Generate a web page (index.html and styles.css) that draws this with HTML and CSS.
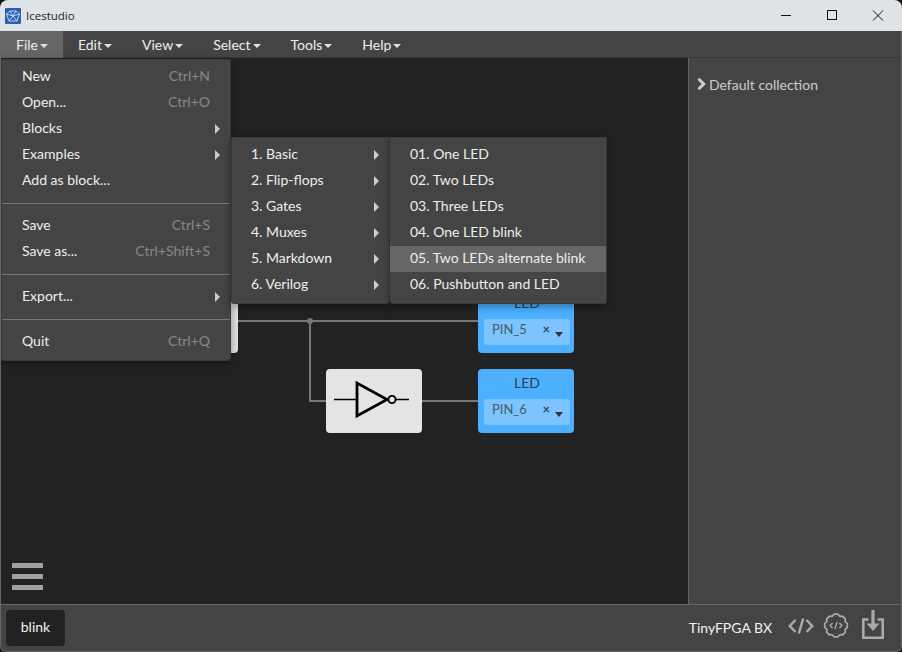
FILE: index.html
```html
<!DOCTYPE html>
<html lang="en">

<head>
    <meta charset="UTF-8" />
    <title>Icestudio</title>
    <link rel="stylesheet" href="styles.css">
</head>

<body>
    <div class="window">
        <div class="titlebar">
            <svg class="app-logo" viewBox="0 0 16 16">
                <rect width="16" height="16" rx="1" fill="#2b5fb3" />
                <path d="M1.5 6 5 3H11L14.5 6 12 13H4ZM5 3 8 8 11 3M1.5 6 8 8 14.5 6M4 13 8 8 12 13" fill="none"
                    stroke="#cfdcf2" stroke-width="0.9" />
            </svg>
            <span class="app-name">Icestudio</span>
            <div class="window-btns">
                <svg viewBox="0 0 46 31" class="win-btn"><path d="M18 15.5H28" stroke="#111" stroke-width="1" fill="none" /></svg>
                <svg viewBox="0 0 46 31" class="win-btn"><rect x="18.5" y="10.5" width="9" height="9" stroke="#111" fill="none" /></svg>
                <svg viewBox="0 0 46 31" class="win-btn"><path d="M18 10.5 28 20.5M28 10.5 18 20.5" stroke="#111" fill="none" /></svg>
            </div>
        </div>

        <div class="menubar">
            <div class="menu-title active">File<i class="caret"></i></div>
            <div class="menu-title">Edit<i class="caret"></i></div>
            <div class="menu-title">View<i class="caret"></i></div>
            <div class="menu-title">Select<i class="caret"></i></div>
            <div class="menu-title">Tools<i class="caret"></i></div>
            <div class="menu-title">Help<i class="caret"></i></div>
        </div>

        <div class="main">
            <div class="canvas">
                <svg class="wires" width="688" height="546">
                    <path d="M238 263H478M310 263V343H326M422 343H478" fill="none" stroke="#777" stroke-width="2" />
                    <circle cx="310" cy="263" r="3" fill="#777" />
                </svg>

                <div class="block hidden-block"></div>

                <div class="block not-gate">
                    <svg width="96" height="64" viewBox="0 0 96 64">
                        <path d="M8 30.5H31M70 30.5H83" fill="none" stroke="#000" stroke-width="1.7" />
                        <path d="M31 14V47L61 30.5Z" fill="none" stroke="#000" stroke-width="2.8" />
                        <circle cx="66" cy="30.5" r="3.6" fill="#e4e4e4" stroke="#000" stroke-width="1.9" />
                    </svg>
                </div>

                <div class="block led led-top">
                    <div class="led-label">LED</div>
                    <div class="pin-select"><span class="pin-name">PIN_5</span><span class="pin-x">×</span><i class="pin-caret"></i></div>
                </div>
                <div class="block led led-bottom">
                    <div class="led-label">LED</div>
                    <div class="pin-select"><span class="pin-name">PIN_6</span><span class="pin-x">×</span><i class="pin-caret"></i></div>
                </div>

                <div class="hamburger">
                    <span></span>
                    <span></span>
                    <span></span>
                </div>
            </div>

            <div class="sidebar">
                <div class="collection">
                    <svg class="chevron" width="10" height="14" viewBox="0 0 10 14">
                        <path d="M2.5 1.8 7.7 7 2.5 12.2" fill="none" stroke="#ccc" stroke-width="3" />
                    </svg>
                    Default collection
                </div>
            </div>
        </div>

        <div class="footer">
            <div class="tab">blink</div>
            <div class="board">TinyFPGA BX</div>
            <svg class="tool-icon code-icon" width="26" height="16" viewBox="0 0 26 16">
                <path d="M7.5 2 1.8 8 7.5 14M18.5 2 24.2 8 18.5 14M15.2 0.5 10.8 15.5" fill="none" stroke="#aaa" stroke-width="2.5" />
            </svg>
            <svg class="tool-icon gear-icon" width="26" height="25" viewBox="0 0 26 25">
                <path d="M11 1.2H15Q16.4 4.2 19.6 3.1L22.4 5.9Q21.3 9 24.3 10.5V14.5Q21.3 16 22.4 19.1L19.6 21.9Q16.4 20.8 15 23.8H11Q9.6 20.8 6.4 21.9L3.6 19.1Q4.7 16 1.7 14.5V10.5Q4.7 9 3.6 5.9L6.4 3.1Q9.6 4.2 11 1.2Z" fill="none" stroke="#aaa" stroke-width="1.7" stroke-linejoin="round" />
                <path d="M9.6 10 7 12.5 9.6 15M16.4 10 19 12.5 16.4 15M14.2 9 11.8 16" fill="none" stroke="#aaa" stroke-width="1.3" />
            </svg>
            <svg class="tool-icon save-icon" width="22" height="29" viewBox="0 0 22 29">
                <path d="M6.5 9.5H1.3V27.7H20.7V9.5H15.5" fill="none" stroke="#aaa" stroke-width="2.6" />
                <path d="M9.4 0H12.6V13.5H17.5L11 21 4.5 13.5H9.4Z" fill="#aaa" />
            </svg>
        </div>

        <!-- open menus -->
        <div class="menu menu-file">
            <div class="menu-item"><span>New</span><span class="shortcut">Ctrl+N</span></div>
            <div class="menu-item"><span>Open...</span><span class="shortcut">Ctrl+O</span></div>
            <div class="menu-item"><span>Blocks</span><i class="arrow"></i></div>
            <div class="menu-item"><span>Examples</span><i class="arrow"></i></div>
            <div class="menu-item"><span>Add as block...</span></div>
            <div class="divider"></div>
            <div class="menu-item"><span>Save</span><span class="shortcut">Ctrl+S</span></div>
            <div class="menu-item"><span>Save as...</span><span class="shortcut">Ctrl+Shift+S</span></div>
            <div class="divider"></div>
            <div class="menu-item"><span>Export...</span><i class="arrow"></i></div>
            <div class="divider"></div>
            <div class="menu-item"><span>Quit</span><span class="shortcut">Ctrl+Q</span></div>
        </div>

        <div class="menu menu-examples">
            <div class="menu-item"><span>1. Basic</span><i class="arrow"></i></div>
            <div class="menu-item"><span>2. Flip-flops</span><i class="arrow"></i></div>
            <div class="menu-item"><span>3. Gates</span><i class="arrow"></i></div>
            <div class="menu-item"><span>4. Muxes</span><i class="arrow"></i></div>
            <div class="menu-item"><span>5. Markdown</span><i class="arrow"></i></div>
            <div class="menu-item"><span>6. Verilog</span><i class="arrow"></i></div>
        </div>

        <div class="menu menu-basic">
            <div class="menu-item"><span>01. One LED</span></div>
            <div class="menu-item"><span>02. Two LEDs</span></div>
            <div class="menu-item"><span>03. Three LEDs</span></div>
            <div class="menu-item"><span>04. One LED blink</span></div>
            <div class="menu-item hover"><span>05. Two LEDs alternate blink</span></div>
            <div class="menu-item"><span>06. Pushbutton and LED</span></div>
        </div>
    </div>
</body>

</html>
```

FILE: styles.css
```css
html, body {
    margin: 0;
    padding: 0;
    background: #141414;
}

body {
    font-family: "Lato", "Liberation Sans", sans-serif;
    font-size: 14px;
    color: #e6e6e6;
}

.window {
    position: relative;
    width: 902px;
    height: 652px;
    display: flex;
    flex-direction: column;
    border-radius: 8px 8px 6px 6px;
    overflow: hidden;
    background: #444;
}

.window::after {
    content: "";
    position: absolute;
    top: 31px;
    left: 0;
    right: 0;
    bottom: 0;
    border: 1px solid #666;
    border-top: none;
    border-radius: 0 0 6px 6px;
    pointer-events: none;
}

/* title bar */
.titlebar {
    height: 31px;
    flex: none;
    display: flex;
    align-items: center;
    padding-left: 5px;
    background: #dfe3e8;
    color: #222;
}

.app-logo {
    width: 16px;
    height: 16px;
}

.app-name {
    margin-left: 5px;
    font-family: "Open Sans", sans-serif;
    font-size: 11.5px;
}

.window-btns {
    margin-left: auto;
    margin-right: 1px;
    display: flex;
}

.win-btn {
    width: 46px;
    height: 31px;
}

/* menu bar */
.menubar {
    height: 27px;
    flex: none;
    box-sizing: border-box;
    display: flex;
    padding-left: 1px;
    background: #444;
    border-bottom: 1px solid #3a3a3a;
}

.menu-title {
    display: flex;
    align-items: center;
    padding: 0 15px;
    height: 27px;
    color: #eee;
}

.menu-title.active {
    background: #666;
}

.caret {
    margin-left: 2px;
    margin-top: 2px;
    border-top: 4px solid #e0e0e0;
    border-left: 4px solid transparent;
    border-right: 4px solid transparent;
}

/* work area */
.main {
    flex: 1;
    display: flex;
    min-height: 0;
}

.canvas {
    position: relative;
    width: 688px;
    flex: none;
    background: #222;
}

.wires {
    position: absolute;
    top: 0;
    left: 0;
}

.block {
    position: absolute;
    width: 96px;
    height: 64px;
    border-radius: 4px;
}

.hidden-block {
    left: 142px;
    top: 231px;
    background: #e4e4e4;
}

.not-gate {
    left: 326px;
    top: 311px;
    background: #e4e4e4;
}

.led {
    left: 478px;
    background: #4db0ff;
    box-sizing: border-box;
    padding: 0 4px 0 6px;
    color: #263e52;
}

.led-top {
    top: 231px;
}

.led-bottom {
    top: 311px;
}

.led-label {
    height: 30px;
    line-height: 28px;
    text-align: center;
}

.pin-select {
    display: flex;
    align-items: center;
    width: 86px;
    height: 26px;
    box-sizing: border-box;
    padding: 0 7px 6px 8px;
    background: #7cc4ff;
    border-radius: 3px;
    font-size: 13px;
    color: #46596b;
}

.pin-x {
    margin-left: auto;
    font-weight: bold;
    color: #3a4a58;
}

.pin-caret {
    margin-left: 5px;
    margin-top: 11px;
    border-top: 5px solid #333;
    border-left: 4px solid transparent;
    border-right: 4px solid transparent;
}

.hamburger {
    position: absolute;
    left: 12px;
    top: 505px;
    display: flex;
    flex-direction: column;
    gap: 6px;
}

.hamburger span {
    display: block;
    width: 31px;
    height: 5px;
    background: #a0a0a0;
}

/* sidebar */
.sidebar {
    flex: 1;
    border-left: 1px solid #666;
}

.collection {
    display: flex;
    align-items: center;
    gap: 3px;
    padding: 16px 0 0 7px;
    height: 20px;
    color: #ccc;
}

/* footer */
.footer {
    height: 48px;
    flex: none;
    box-sizing: border-box;
    display: flex;
    align-items: center;
    padding: 0 18px 0 6px;
    border-top: 1px solid #666;
    background: #444;
}

.tab {
    width: 59px;
    height: 36px;
    margin-bottom: 1px;
    line-height: 33px;
    text-align: center;
    background: #222;
    border-radius: 4px;
    color: #f2f2f2;
}

.board {
    margin-left: auto;
    margin-right: 16px;
    margin-bottom: 2px;
    color: #f2f2f2;
}

.code-icon {
    margin-right: 9px;
    margin-bottom: 5px;
}

.gear-icon {
    margin-right: 13px;
    margin-bottom: 6px;
}

.save-icon {
    margin-bottom: 8px;
}

/* open menus */
.menu {
    position: absolute;
    box-sizing: border-box;
    background: #444;
    box-shadow: 0 2px 8px rgba(0, 0, 0, 0.4);
    border: 1px solid #3a3a3a;
    border-radius: 0 0 3px 3px;
    padding: 4px 0 0;
}

.menu-file {
    left: 1px;
    top: 59px;
    width: 230px;
    height: 302px;
}

.menu-examples {
    left: 231px;
    top: 137px;
    width: 159px;
    height: 167px;
}

.menu-basic {
    left: 390px;
    top: 137px;
    width: 217px;
    height: 167px;
    border-left: none;
}

.menu-item {
    height: 26px;
    box-sizing: border-box;
    display: flex;
    align-items: center;
    justify-content: space-between;
    padding: 0 20px 4px 20px;
    white-space: nowrap;
    color: #eee;
    position: relative;
}

.menu-examples .menu-item {
    padding-left: 19px;
}

.menu-item.hover {
    background: #666;
}

.shortcut {
    color: #888;
}

.arrow {
    position: absolute;
    right: 10px;
    top: 7.5px;
    border-left: 5px solid #ccc;
    border-top: 5px solid transparent;
    border-bottom: 5px solid transparent;
}

.divider {
    height: 1px;
    margin: 9px 0;
    background: #777;
}
```
